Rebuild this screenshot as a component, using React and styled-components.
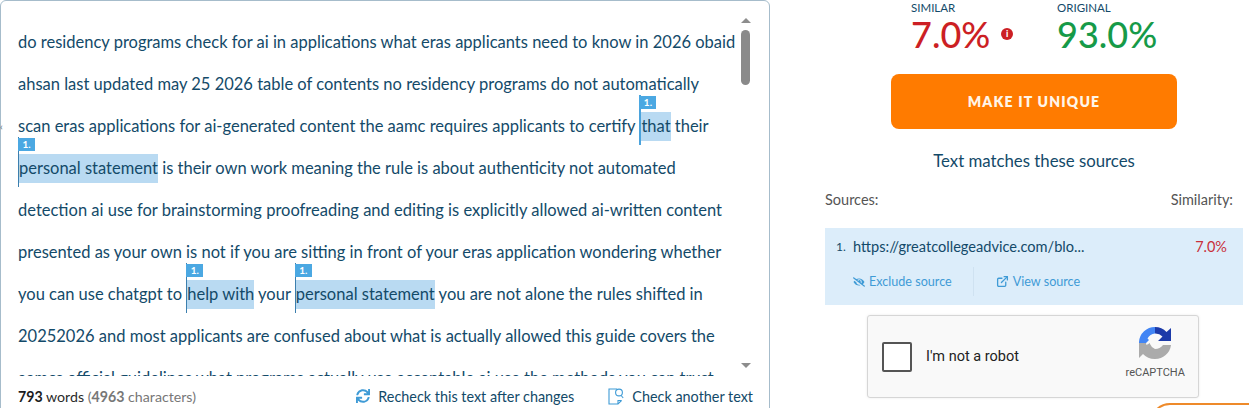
import React from 'react';
import styled, { createGlobalStyle } from 'styled-components';
import { FaSync, FaEyeSlash } from 'react-icons/fa';
import { ExternalLink } from 'lucide-react';

const GlobalStyle = createGlobalStyle`
  html, body {
    margin: 0;
    height: 408px;
    overflow: hidden;
    background: #fff;
    font-family: Lato, "Noto Sans", sans-serif;
  }
`;

const Page = styled.div`
  display: flex;
  width: 1249px;
  height: 408px;
  overflow: hidden;
`;

const EditorPanel = styled.section`
  position: relative;
  box-sizing: border-box;
  width: 770px;
  height: 420px;
  flex: none;
  display: flex;
  flex-direction: column;
  border: 1px solid #a6bccb;
  border-radius: 6px;
`;

const EdgeTick = styled.span`
  position: absolute;
  left: -1px;
  top: 121px;
  width: 3px;
  height: 9px;
  color: #5c6f7c;
  font-size: 10px;
  line-height: 9px;
`;

const EditorBody = styled.div`
  display: flex;
  height: 375px;
  flex: none;
  overflow: hidden;
`;

const TextArea = styled.div`
  flex: 1;
  min-width: 0;
  overflow: hidden;
  padding-left: 17px;
  padding-top: 20px;
  font-size: 16.5px;
  color: #134a69;
`;

const Line = styled.div`
  height: 42px;
  line-height: 42px;
  white-space: nowrap;
`;

const Match = styled.span`
  position: relative;
  display: inline-block;
  height: 29px;
  line-height: 29px;
  padding-left: ${({ $thick }) => ($thick ? '2px' : '1px')};
  background: #b9daf2;

  &::before {
    content: '';
    position: absolute;
    left: 0;
    top: -17px;
    bottom: -4px;
    width: ${({ $thick }) => ($thick ? '2px' : '1px')};
    background: ${({ $thick }) => ($thick ? '#4ba3dc' : '#3c7fae')};
  }
`;

const Flag = styled.span`
  position: absolute;
  left: 0;
  top: -16px;
  width: 17px;
  height: 13px;
  background: #4ba8e2;
  color: #fff;
  font-size: 10px;
  font-weight: 700;
  line-height: 13px;
  text-align: center;
`;

const ScrollColumn = styled.div`
  width: 28px;
  flex: none;
  position: relative;
`;

const Arrow = styled.span`
  position: absolute;
  left: 0;
  ${({ $down }) => ($down ? 'top: 362px;' : 'top: 17px;')}
  width: 0;
  height: 0;
  border-left: 5px solid transparent;
  border-right: 5px solid transparent;
  ${({ $down }) => ($down ? 'border-top: 5px solid #8d8d8d;' : 'border-bottom: 5px solid #8d8d8d;')}
`;

const Thumb = styled.div`
  margin-top: 29px;
  width: 9px;
  height: 55px;
  border-radius: 5px;
  background: #8a8a8a;
`;

const EditorFooter = styled.footer`
  display: flex;
  align-items: center;
  height: 40px;
  flex: none;
  padding: 0 16px 0 17px;
  box-sizing: border-box;
  font-size: 14.4px;
  color: #134a69;
`;

const Counts = styled.span`
  color: #777;
  margin-right: auto;
  font-size: 14.2px;

  b { color: #1c1c1c; font-weight: 700; }
  em { color: #777; font-style: normal; font-weight: 700; }
  i { color: #2a2a2a; font-style: normal; }
`;

const FooterAction = styled.a`
  display: inline-flex;
  align-items: center;
  gap: 8px;
  margin-left: 34px;
  color: #134a69;
  svg { color: #3f9bd6; flex: none; }
`;

const Sidebar = styled.aside`
  width: 479px;
  flex: none;
  box-sizing: border-box;
  padding: 0 6px 0 55px;
  display: flex;
  flex-direction: column;
  color: #134a69;

  & > * { flex: none; }
`;

const Stats = styled.div`
  display: flex;
  gap: 40px;
  box-sizing: border-box;
  padding: 1px 0 0 86px;
  height: 74px;
`;

const Stat = styled.div`
  display: flex;
  flex-direction: column;
  min-width: 106px;
`;

const StatLabel = styled.span`
  font-size: 11.5px;
  line-height: 14px;
  color: #134a69;
`;

const StatValue = styled.span`
  display: flex;
  align-items: center;
  gap: 11px;
  font-size: 36px;
  font-weight: 500;
  line-height: 40px;
  margin-top: -1px;
  color: ${({ $tone }) => ($tone === 'bad' ? '#cc1f24' : '#169a48')};
`;

const InfoDot = styled.span`
  width: 12px;
  height: 12px;
  border-radius: 50%;
  background: #cc1f24;
  color: #fff;
  font-size: 9px;
  font-weight: 900;
  line-height: 12px;
  text-align: center;
`;

const UniqueButton = styled.button`
  align-self: center;
  width: 286px;
  height: 55px;
  border: 0;
  border-radius: 8px;
  background: #ff7b00;
  color: #fff5e8;
  font: 800 14px Lato, sans-serif;
  letter-spacing: 1.2px;
`;

const MatchesTitle = styled.h2`
  margin: 22px 0 0;
  font-size: 16.8px;
  font-weight: 400;
  line-height: 20px;
  text-align: center;
  color: #134a69;
`;

const SourcesHead = styled.div`
  display: flex;
  justify-content: space-between;
  margin-top: 20px;
  padding-right: 10px;
  font-size: 14.5px;
  line-height: 18px;
  color: #555;
`;

const SourceCard = styled.div`
  margin-top: 19px;
  height: 77px;
  box-sizing: border-box;
  padding: 8px 16px 0 11px;
  background: #dcedfa;
`;

const SourceRow = styled.div`
  display: flex;
  align-items: center;
  height: 20px;
  font-size: 14.6px;
  color: #134a69;
`;

const SourceIndex = styled.span`
  width: 17px;
  font-size: 12px;
`;

const SourceUrl = styled.span`
  flex: 1;
`;

const SourcePercent = styled.span`
  color: #c9303a;
  font-size: 14.5px;
`;

const SourceActions = styled.div`
  display: flex;
  align-items: center;
  margin-top: 11px;
  padding-left: 17px;
  font-size: 12.6px;
  color: #3f9bd6;
`;

const SourceAction = styled.a`
  display: inline-flex;
  align-items: center;
  gap: 4px;
  height: 29px;
  padding-right: ${({ $first }) => ($first ? '21px' : '0')};
  margin-right: ${({ $first }) => ($first ? '22px' : '0')};
  border-right: ${({ $first }) => ($first ? '1px solid #cfe2f1' : '0')};
`;

const Captcha = styled.div`
  display: flex;
  align-items: center;
  box-sizing: border-box;
  width: 332px;
  height: 83px;
  margin: 10px 0 0 42px;
  padding: 0 13px 0 14px;
  background: #f9f9f9;
  border: 1px solid #d6d6d6;
  border-radius: 3px;
  box-shadow: 0 0 3px rgba(0, 0, 0, 0.08);
  font-family: Roboto, sans-serif;
`;

const CaptchaBox = styled.span`
  width: 30px;
  height: 30px;
  box-sizing: border-box;
  border: 2px solid #555;
  border-radius: 2px;
  background: #fff;
`;

const CaptchaLabel = styled.span`
  flex: 1;
  margin-left: 14px;
  font-size: 14.5px;
  color: #222;
`;

const CaptchaBrand = styled.div`
  display: flex;
  flex-direction: column;
  align-items: center;
  gap: 6px;
  font-size: 11px;
  color: #555;
  margin-top: -8px;
`;

const CornerPill = styled.div`
  width: 120px;
  height: 40px;
  margin: 5px 0 0 325px;
  border: 2px solid #ee8a2a;
  border-radius: 20px;
`;

const DocSearchIcon = () => (
  <svg width="16" height="17" viewBox="0 0 16 17" fill="none" stroke="currentColor" strokeWidth="1.1">
    <path d="M9 1H1v15h9l3.5-3.5" />
    <path d="M10 16v-3.5h3.5" />
    <circle cx="11" cy="4.5" r="3.4" />
    <path d="M13.2 7.5l2 2.5" />
  </svg>
);

const RecaptchaLogo = () => (
  <svg width="34" height="33" viewBox="0 0 34 33">
    <path d="M17 0a16 16 0 0 1 11.5 5L33 1v13H20l4.500-4.500A10 10 0 0 0 17 6.500z" fill="#1c3aa9" />
    <path d="M17 0A16 16 0 0 0 1 15v1h7l3-3-1.500-1.500A10 10 0 0 1 17 6.500z" fill="#4285f4" />
    <path d="M1 16h7a9 9 0 0 0 .5 2l3.500-2v1a9 9 0 0 0 5 5 10 10 0 0 0 8-4h8a16 16 0 0 1-16 14A16 16 0 0 1 5 27l-4 4z" fill="#ababab" />
  </svg>
);

const LINES = [
  'do residency programs check for ai in applications what eras applicants need to know in 2026 obaid',
  'ahsan last updated may 25 2026 table of contents no residency programs do not automatically',
  <>
    scan eras applications for ai-generated content the aamc requires applicants to certify{' '}
    <Match $thick><Flag>1.</Flag>that</Match> their
  </>,
  <>
    <Match><Flag>1.</Flag>personal statement</Match> is their own work meaning the rule is about authenticity not automated
  </>,
  'detection ai use for brainstorming proofreading and editing is explicitly allowed ai-written content',
  'presented as your own is not if you are sitting in front of your eras application wondering whether',
  <>
    you can use chatgpt to <Match><Flag>1.</Flag>help with</Match> your{' '}
    <Match><Flag>1.</Flag>personal statement</Match> you are not alone the rules shifted in
  </>,
  '20252026 and most applicants are confused about what is actually allowed this guide covers the',
  'aamcs official guidelines what programs actually use acceptable ai use the methods you can trust',
];

export default function App() {
  return (
    <Page>
      <GlobalStyle />
      <EditorPanel>
        <EdgeTick>‹</EdgeTick>
        <EditorBody>
          <TextArea>
            {LINES.map((line, i) => (
              <Line key={i}>{line}</Line>
            ))}
          </TextArea>
          <ScrollColumn>
            <Arrow />
            <Thumb />
            <Arrow $down />
          </ScrollColumn>
        </EditorBody>
        <EditorFooter>
          <Counts>
            <b>793</b> <i>words</i> (<em>4963</em> characters)
          </Counts>
          <FooterAction>
            <FaSync size={14} />
            Recheck this text after changes
          </FooterAction>
          <FooterAction>
            <DocSearchIcon />
            Check another text
          </FooterAction>
        </EditorFooter>
      </EditorPanel>
      <Sidebar>
        <Stats>
          <Stat>
            <StatLabel>SIMILAR</StatLabel>
            <StatValue $tone="bad">7.0% <InfoDot>i</InfoDot></StatValue>
          </Stat>
          <Stat>
            <StatLabel>ORIGINAL</StatLabel>
            <StatValue>93.0%</StatValue>
          </Stat>
        </Stats>
        <UniqueButton>MAKE IT UNIQUE</UniqueButton>
        <MatchesTitle>Text matches these sources</MatchesTitle>
        <SourcesHead>
          <span>Sources:</span>
          <span>Similarity:</span>
        </SourcesHead>
        <SourceCard>
          <SourceRow>
            <SourceIndex>1.</SourceIndex>
            <SourceUrl>https://greatcollegeadvice.com/blo...</SourceUrl>
            <SourcePercent>7.0%</SourcePercent>
          </SourceRow>
          <SourceActions>
            <SourceAction $first><FaEyeSlash size={12} />Exclude source</SourceAction>
            <SourceAction><ExternalLink size={13} strokeWidth={2.4} />View source</SourceAction>
          </SourceActions>
        </SourceCard>
        <Captcha>
          <CaptchaBox />
          <CaptchaLabel>I'm not a robot</CaptchaLabel>
          <CaptchaBrand>
            <RecaptchaLogo />
            reCAPTCHA
          </CaptchaBrand>
        </Captcha>
        <CornerPill />
      </Sidebar>
    </Page>
  );
}
